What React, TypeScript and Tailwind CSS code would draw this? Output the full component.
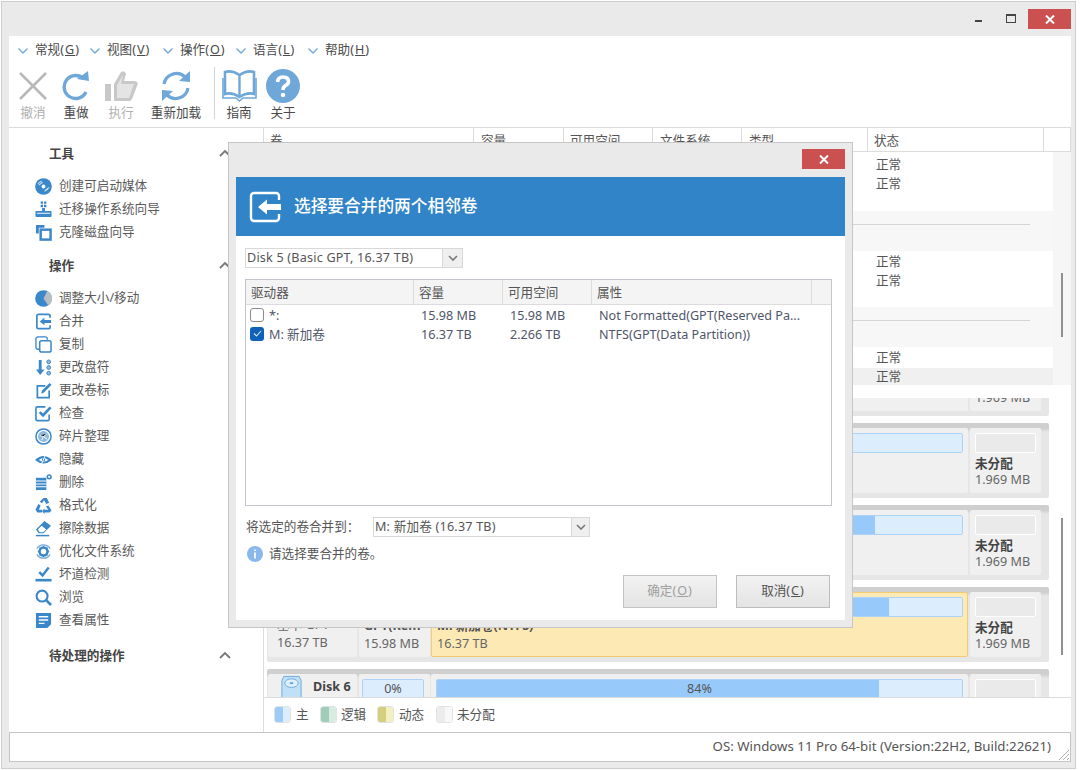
import { ReactNode } from "react";

const BLUE = "#3a87c9";
const LIGHT = "#6fa8d8";

function Ico({ children, size = 18 }: { children: ReactNode; size?: number }) {
  return (
    <svg width={size} height={size} viewBox="0 0 18 18" className="shrink-0">
      {children}
    </svg>
  );
}

const sideIcons: Record<string, ReactNode> = {
  disc: (
    <>
      <circle cx="9" cy="9" r="8.8" fill={BLUE} />
      <path d="M3 6 L7 3 M4 7.5 L8 4.5 M11 13 L15 10 M10 14 L14 11.5" stroke="#cfe3f4" strokeWidth="1.1" />
      <circle cx="9" cy="9" r="2" fill="#fff" />
    </>
  ),
  migrate: (
    <>
      <path d="M6 0.5h2.5V3H6z M9.5 0.5H12V3H9.5z M6 4h2.5v2.5H6z M9.5 4H12v2.5H9.5z" fill={BLUE} />
      <path d="M7.5 7.5h3V10.5h6a1 1 0 0 1 1 1v4.5a1 1 0 0 1-1 1h-15a1 1 0 0 1-1-1v-4.5a1 1 0 0 1 1-1h6z" fill={BLUE} />
      <path d="M2 13h14" stroke="#fff" strokeWidth="1" />
    </>
  ),
  clone: (
    <>
      <path d="M1 1h9v3H4v6H1z" fill={BLUE} />
      <rect x="6" y="6" width="10.5" height="10.5" fill="none" stroke={BLUE} strokeWidth="2.6" />
    </>
  ),
  resize: (
    <>
      <circle cx="9" cy="9" r="8.8" fill={BLUE} />
      <path d="M9 9 L13 1 A8.8 8.8 0 0 1 14 16.5 Z" fill="#b9bec3" />
    </>
  ),
  merge: (
    <>
      <path d="M16 5V3a1.5 1.5 0 0 0-1.5-1.5h-11A1.5 1.5 0 0 0 2 3v12a1.5 1.5 0 0 0 1.5 1.5h11A1.5 1.5 0 0 0 16 15v-2" fill="none" stroke={BLUE} strokeWidth="1.8" />
      <path d="M5 9 L10 5 V7.5 H17 V10.5 H10 V13 Z" fill={BLUE} />
    </>
  ),
  copy: (
    <>
      <path d="M5 14H3a2 2 0 0 1-2-2V3a2 2 0 0 1 2-2h8a2 2 0 0 1 2 2v1" fill="none" stroke={BLUE} strokeWidth="1.4" />
      <rect x="5" y="5" width="12" height="12" rx="2" fill="none" stroke={BLUE} strokeWidth="1.6" />
    </>
  ),
  letter: (
    <>
      <path d="M4 1h3v10h3l-4.5 6L1 11h3z" fill={BLUE} />
      <circle cx="14.5" cy="3" r="2" fill="#8fb8dc" stroke={BLUE} strokeWidth="1" />
      <circle cx="14.5" cy="9" r="2" fill="#8fb8dc" stroke={BLUE} strokeWidth="1" />
      <circle cx="14.5" cy="15" r="2" fill="#8fb8dc" stroke={BLUE} strokeWidth="1" />
    </>
  ),
  label: (
    <>
      <path d="M11 4H2.5v12.5H15V9" fill="none" stroke={BLUE} strokeWidth="1.8" />
      <path d="M6.5 12.5 L7.5 9 L15.5 1 L17.5 3 L9.5 11 Z" fill={BLUE} />
    </>
  ),
  check: (
    <>
      <path d="M15 10v5a1.5 1.5 0 0 1-1.5 1.5h-11A1.5 1.5 0 0 1 1 15V3.5A1.5 1.5 0 0 1 2.5 2H11" fill="none" stroke={BLUE} strokeWidth="1.7" />
      <path d="M5 7.5 L8.5 11 L16.5 2.5" fill="none" stroke={BLUE} strokeWidth="2.8" />
    </>
  ),
  defrag: (
    <>
      <circle cx="9" cy="9" r="8" fill="none" stroke={BLUE} strokeWidth="1.6" />
      <circle cx="9" cy="9" r="5.8" fill="#8db9df" />
      <path d="M5 8 L9 9 L13 6 M9 9 L7 13 M9 9 L13 12" stroke="#fff" strokeWidth="1" />
    </>
  ),
  hide: (
    <>
      <path d="M0 9.5 Q9 1 18 9.5 Q9 17 0 9.5Z" fill={BLUE} />
      <path d="M4 9.5 Q9 5.5 14 9.5 Q9 13 4 9.5Z" fill="#fff" />
      <circle cx="9" cy="9.3" r="1.8" fill={BLUE} />
      <path d="M6 16 L12 2" stroke="#fff" strokeWidth="1" />
    </>
  ),
  delete: (
    <>
      <path d="M1 4h11v13H1z" fill={BLUE} />
      <path d="M1 7.5h11 M1 10.5h11 M1 13.5h11" stroke="#fff" strokeWidth="1.1" />
      <circle cx="15" cy="3" r="2" fill="none" stroke={BLUE} strokeWidth="1.6" />
    </>
  ),
  format: (
    <>
      <path d="M9 1 L12.5 1 L15 6 L12 7.5 L9.5 3.5 L7.5 6.5 L5 5 Z" fill={BLUE} />
      <path d="M3.5 7.5 L0.5 13.5 L2.5 16.5 H7.5 V13.5 H4 L6 9 Z" fill={BLUE} />
      <path d="M14 9 L17.5 14 L15.5 16.5 H10 V18 L7.5 15 L10 12 V13.5 H14.2 L11.5 10 Z" fill={BLUE} />
    </>
  ),
  erase: (
    <>
      <path d="M1 10 L10 1 L17 6 L9 14 H4 Z" fill={BLUE} />
      <path d="M3 10 L7 6 L12 10 L8.5 13 H5 Z" fill="#fff" />
      <path d="M1 16.5h14" stroke={BLUE} strokeWidth="1.6" />
    </>
  ),
  optimize: (
    <>
      <path d="M2 6 A8 8 0 0 1 16 6 M16 12 A8 8 0 0 1 2 12" fill="none" stroke="#76aad6" strokeWidth="1.3" />
      <circle cx="9" cy="9" r="4.2" fill="none" stroke={BLUE} strokeWidth="2.6" />
      <path d="M9 3v2 M9 13v2 M3 9h2 M13 9h2 M4.8 4.8l1.4 1.4 M11.8 11.8l1.4 1.4 M13.2 4.8l-1.4 1.4 M6.2 11.8l-1.4 1.4" stroke={BLUE} strokeWidth="1.4" />
    </>
  ),
  bad: (
    <>
      <path d="M4.5 6.5 L8 10 L14.5 1.5" fill="none" stroke={BLUE} strokeWidth="2.6" />
      <path d="M0.5 15h17" stroke={BLUE} strokeWidth="2.8" />
    </>
  ),
  browse: (
    <>
      <circle cx="7.5" cy="7.5" r="5.8" fill="none" stroke={BLUE} strokeWidth="2.2" />
      <path d="M11.5 11.5 L17 17" stroke={BLUE} strokeWidth="2.8" />
    </>
  ),
  props: (
    <>
      <path d="M1 1h16v12l-4 4H1z" fill={BLUE} />
      <path d="M4 5h10 M4 8.5h10 M4 12h6" stroke="#fff" strokeWidth="1.4" />
    </>
  ),
};

const tools = [
  ["disc", "创建可启动媒体"],
  ["migrate", "迁移操作系统向导"],
  ["clone", "克隆磁盘向导"],
];

const actions = [
  ["resize", "调整大小/移动"],
  ["merge", "合并"],
  ["copy", "复制"],
  ["letter", "更改盘符"],
  ["label", "更改卷标"],
  ["check", "检查"],
  ["defrag", "碎片整理"],
  ["hide", "隐藏"],
  ["delete", "删除"],
  ["format", "格式化"],
  ["erase", "擦除数据"],
  ["optimize", "优化文件系统"],
  ["bad", "坏道检测"],
  ["browse", "浏览"],
  ["props", "查看属性"],
];

function Chevron({ className = "" }: { className?: string }) {
  return (
    <svg width="12" height="8" viewBox="0 0 12 8" className={className}>
      <path d="M1 7 L6 2 L11 7" fill="none" stroke="#777" strokeWidth="1.8" />
    </svg>
  );
}

function SideHeader({ title, mt }: { title: string; mt: string }) {
  return (
    <div className={`flex h-[20px] items-center justify-between pl-[40px] pr-[32px] font-bold text-[#444] ${mt}`}>
      <span className="pt-[2px]">{title}</span>
      <Chevron />
    </div>
  );
}

function SideList({ items, mt }: { items: string[][]; mt: string }) {
  return (
    <div className={mt}>
      {items.map(([icon, label]) => (
        <div key={label} className="flex h-[23px] items-center gap-[7px] pl-[26px]">
          <Ico size={17}>{sideIcons[icon]}</Ico>
          <span className="text-[#5a5a5a]">{label}</span>
        </div>
      ))}
    </div>
  );
}

function MenuItem({ label, k, w }: { label: string; k: string; w: string }) {
  return (
    <div className={`flex items-center gap-[7px] ${w}`}>
      <svg width="10" height="6" viewBox="0 0 10 6">
        <path d="M0.5 0.5 L5 5 L9.5 0.5" fill="none" stroke="#6fa8d8" strokeWidth="1.4" />
      </svg>
      <span className="text-[#4a4a4a]">
        {label}
        <span className="tracking-[1px]">
          (<span className="underline">{k}</span>)
        </span>
      </span>
    </div>
  );
}

function ToolBtn({ label, w, off, children }: { label: string; w: string; off?: boolean; children: ReactNode }) {
  return (
    <div className={`flex flex-col items-center ${w}`}>
      <div className="flex h-[38px] items-center justify-center">{children}</div>
      <span className={`mt-[2px] ${off ? "text-[#b0b0b0]" : "text-[#4a4a4a]"}`}>{label}</span>
    </div>
  );
}

function StatusRows({ lastHot }: { lastHot?: boolean }) {
  return (
    <>
      <div className="flex h-[19px] items-center pl-[612px] text-[#555]">正常</div>
      <div className={`flex h-[19px] items-center pl-[612px] text-[#555] ${lastHot ? "bg-[#f0f0f0]" : ""}`}>正常</div>
    </>
  );
}

function GroupBand() {
  return (
    <div className="mb-[2px] h-[40px] bg-[#f7f7f7] pl-[20px] pr-[23px] pt-[13px]">
      <div className="h-[1px] bg-[#d5d5d8]" />
    </div>
  );
}

function Bar({ fill, text, className = "" }: { fill: number; text?: string; className?: string }) {
  return (
    <div className={`relative h-[20px] overflow-hidden rounded-[2px] border border-[#acd3f7] bg-[#dceefe] ${className}`}>
      <div className="h-full bg-[#97cafb]" style={{ width: `${fill}%` }} />
      {text && <div className="absolute inset-0 flex items-center justify-center pt-[1px] text-[#555]">{text}</div>}
    </div>
  );
}

function DiskRow({
  name,
  base,
  smallTitle,
  smallSize,
  smallPct,
  mainTitle,
  mainPct,
  mainText,
  hot,
  first,
}: {
  name: string;
  base?: string;
  smallTitle?: string;
  smallSize?: string;
  smallPct?: string;
  mainTitle?: string;
  mainPct: number;
  mainText?: string;
  hot?: boolean;
  first?: boolean;
}) {
  return (
    <div className={`flex h-[75px] w-[782px] shrink-0 rounded-[2px] bg-gradient-to-b from-[#cfcfcf] from-[7%] to-[#e6e6e6] to-[12%] pl-[1px] pr-[8px] pt-[5px] ${first ? "-mt-[57px]" : ""}`}>
      <div className="h-[65px] w-[89px] shrink-0 rounded-[2px] bg-[#f0f0f0] pl-[9px] text-[#666]">
        <div className="flex h-[24px] items-center gap-[10px] pl-[3px]">
          <svg width="23" height="24" viewBox="0 0 24 24" className="shrink-0">
            <path d="M4 2h16l2 4v18H2V6z" fill="#bfe0f6" stroke="#6fa8d8" strokeWidth="1" />
            <ellipse cx="12" cy="9" rx="7" ry="4.5" fill="#dff0fb" stroke="#6fa8d8" strokeWidth="1" />
            <ellipse cx="12" cy="9" rx="2" ry="1.2" fill="#6fa8d8" />
          </svg>
          <span className="pt-[3px] font-bold text-[#444]">{name}</span>
        </div>
        <div className="h-[18px] leading-[18px]">{base}</div>
        <div className="h-[18px] leading-[18px]">16.37 TB</div>
      </div>
      <div className="ml-[2px] h-[65px] w-[71px] shrink-0 rounded-[2px] bg-[#f0f0f0] pl-[3px] pt-[5px] text-[#666]">
        <Bar fill={smallPct ? 0 : 100} text={smallPct} className="w-[62px]" />
        <div className="h-[18px] overflow-hidden pl-[2px] font-bold leading-[18px] text-[#555]">{smallTitle}</div>
        <div className="h-[18px] pl-[2px] leading-[18px]">{smallSize}</div>
      </div>
      <div className={`ml-[1px] h-[65px] w-[537px] shrink-0 rounded-[2px] text-[#666] ${hot ? "border border-[#f2cb72] bg-[#fde9b4] px-[4px] pt-[4px]" : "bg-[#f0f0f0] px-[5px] pt-[5px]"}`}>
        <Bar fill={mainPct} text={mainText} />
        <div className="h-[18px] pl-[1px] font-bold leading-[18px] text-[#555]">{mainTitle}</div>
        <div className="h-[18px] pl-[1px] leading-[18px]">16.37 TB</div>
      </div>
      <div className="ml-[2px] h-[65px] w-[71px] shrink-0 rounded-[2px] bg-[#f0f0f0] pl-[5px] pt-[5px] text-[#666]">
        <div className="h-[20px] w-[61px] rounded-[2px] border border-white bg-[#eaeaea]" />
        <div className="h-[18px] pt-[2px] font-bold leading-[18px] text-[#444]">未分配</div>
        <div className="h-[18px] leading-[18px]">1.969 MB</div>
      </div>
    </div>
  );
}

function Swatch({ a, b }: { a: string; b: string }) {
  return (
    <div className="flex h-[17px] w-[17px] overflow-hidden rounded-[3px] border border-[#e2e2e2]">
      <div className={`w-[8px] ${a}`} />
      <div className={`flex-1 ${b}`} />
    </div>
  );
}

function Combo({ text, w, arrow }: { text: string; w: string; arrow: string }) {
  return (
    <div className={`flex h-[20px] items-center border border-[#d8d8d8] ${w}`}>
      <span className="flex-1 pl-[1px] pt-[1px] tracking-[0.2px] text-[#555]">{text}</span>
      <div className={`flex h-full items-center justify-center border-l border-[#d8d8d8] bg-[#efefef] ${arrow}`}>
        <svg width="10" height="6" viewBox="0 0 10 6">
          <path d="M1 1 L5 5 L9 1" fill="none" stroke="#777" strokeWidth="1.6" />
        </svg>
      </div>
    </div>
  );
}

function CloseBtn({ w }: { w: string }) {
  return (
    <div className={`flex h-[20px] items-center justify-center bg-[#cb5050] ${w}`}>
      <svg width="10" height="9" viewBox="0 0 10 9">
        <path d="M1 0.5 L9 8.5 M9 0.5 L1 8.5" stroke="#fff" strokeWidth="2" />
      </svg>
    </div>
  );
}

function MergeDialog() {
  return (
    <div className="absolute left-[226px] top-[140px] flex h-[486px] w-[625px] flex-col border border-[#c6c6c6] bg-[#eaeaea] px-[7px] pb-[7px]">
      <div className="flex h-[34px] shrink-0 justify-end pt-[6px]">
        <CloseBtn w="w-[43px]" />
      </div>
      <div className="flex h-[59px] shrink-0 items-center gap-[13px] bg-[#3184c8] pl-[13px]">
        <svg width="32" height="32" viewBox="0 0 32 32">
          <path d="M30 9V5a3 3 0 0 0-3-3H5a3 3 0 0 0-3 3v22a3 3 0 0 0 3 3h22a3 3 0 0 0 3-3v-4" fill="none" stroke="#fff" strokeWidth="2.4" />
          <path d="M9 16 L18 8.5 V13 H32 V19 H18 V23.5 Z" fill="#fff" />
        </svg>
        <span className="text-[16.7px] font-medium text-white">选择要合并的两个相邻卷</span>
      </div>
      <div className="flex flex-1 flex-col bg-white pl-[9px]">
        <Combo text="Disk 5 (Basic GPT, 16.37 TB)" w="mt-[12px] w-[218px]" arrow="w-[20px]" />
        <div className="mt-[11px] h-[227px] w-[587px] border border-[#c4c4cc]">
          <div className="flex h-[25px] border-b border-[#dcdcdc] bg-[#f4f4f4] text-[#555]">
            <div className="flex w-[168px] items-center border-r border-[#dcdcdc] pl-[5px] pt-[3px]">驱动器</div>
            <div className="flex w-[89px] items-center border-r border-[#dcdcdc] pl-[5px] pt-[3px]">容量</div>
            <div className="flex w-[89px] items-center border-r border-[#dcdcdc] pl-[5px] pt-[3px]">可用空间</div>
            <div className="flex w-[220px] items-center border-r border-[#dcdcdc] pl-[5px] pt-[3px]">属性</div>
          </div>
          <div className="flex h-[19px] items-center text-[#50566a]">
            <div className="flex w-[168px] items-center gap-[5px] pl-[4px]">
              <div className="h-[14px] w-[14px] rounded-[3px] border border-[#8a8a8a]" />
              <span className="pt-[3px]">*:</span>
            </div>
            <div className="w-[89px] pl-[7px] pt-[3px]">15.98 MB</div>
            <div className="w-[89px] pl-[7px] pt-[3px]">15.98 MB</div>
            <div className="w-[220px] pl-[7px] pt-[3px]">Not Formatted(GPT(Reserved Pa...</div>
          </div>
          <div className="flex h-[19px] items-center text-[#50566a]">
            <div className="flex w-[168px] items-center gap-[5px] pl-[4px]">
              <div className="flex h-[14px] w-[14px] items-center justify-center rounded-[3px] bg-[#0f62b8]">
                <svg width="9" height="7" viewBox="0 0 9 7">
                  <path d="M1 3.5 L3.5 6 L8 1" fill="none" stroke="#dbe9f7" strokeWidth="1.1" />
                </svg>
              </div>
              <span className="pt-[3px]">M: 新加卷</span>
            </div>
            <div className="w-[89px] pl-[7px] pt-[3px]">16.37 TB</div>
            <div className="w-[89px] pl-[7px] pt-[3px]">2.266 TB</div>
            <div className="w-[220px] pl-[7px] pt-[3px]">NTFS(GPT(Data Partition))</div>
          </div>
        </div>
        <div className="mt-[11px] flex h-[20px] items-center">
          <span className="w-[128px] pl-[1px] text-[#555]">将选定的卷合并到：</span>
          <Combo text="M: 新加卷 (16.37 TB)" w="w-[217px]" arrow="w-[18px]" />
        </div>
        <div className="mt-[8px] flex h-[18px] items-center gap-[6px] pl-[2px]">
          <svg width="16" height="16" viewBox="0 0 16 16">
            <circle cx="8" cy="8" r="8" fill="#8ab8ec" />
            <path d="M8 3.5v1.6 M8 6.6v6" stroke="#fff" strokeWidth="1.7" />
          </svg>
          <span className="pt-[1px] text-[#555]">请选择要合并的卷。</span>
        </div>
        <div className="mt-[12px] flex justify-end gap-[19px] pr-[15px]">
          <div className="flex h-[33px] w-[94px] items-center justify-center border border-[#c4c4c4] bg-gradient-to-b from-[#f2f2f2] to-[#e4e4e4] text-[#a0a0a0]">
            <span>
              确定
              <span className="tracking-[1px]">
                (<span className="underline">O</span>)
              </span>
            </span>
          </div>
          <div className="flex h-[33px] w-[94px] items-center justify-center border border-[#bdbdbd] bg-gradient-to-b from-[#f2f2f2] to-[#e4e4e4] text-[#555]">
            <span>
              取消
              <span className="tracking-[1px]">
                (<span className="underline">C</span>)
              </span>
            </span>
          </div>
        </div>
      </div>
    </div>
  );
}

export default function App() {
  const cols = [
    ["卷", "w-[210px] pl-[6px]"],
    ["容量", "w-[90px] pl-[7px]"],
    ["可用空间", "w-[89px] pl-[6px]"],
    ["文件系统", "w-[89px] pl-[7px]"],
    ["类型", "w-[126px] pl-[7px]"],
    ["状态", "w-[176px] pl-[6px]"],
    ["", "w-[27px]"],
  ];

  return (
    <div className="h-[770px] w-[1080px] overflow-hidden bg-white pl-[1px] pt-[1px] font-['Noto_Sans','Noto_Sans_CJK_SC',sans-serif] text-[12.6px] leading-none">
      <div className="relative flex h-[768px] w-[1075px] flex-col border border-[#cdcdcd] bg-[#eaeaea] pb-[6px] pl-[7px] pr-[4px]">
        <div className="flex h-[34px] shrink-0 items-start justify-end pt-[7px]">
          <div className="mr-[24px] mt-[11px] h-[2px] w-[7px] bg-[#444]" />
          <div className="mr-[12px] mt-[5px] h-[9px] w-[10px] border border-t-2 border-[#444]" />
          <CloseBtn w="w-[43px]" />
        </div>

        <div className="flex min-h-0 flex-1 flex-col bg-white">
          <div className="flex h-[28px] shrink-0 items-center pl-[9px] pt-[1px]">
            <MenuItem label="常规" k="G" w="w-[72px]" />
            <MenuItem label="视图" k="V" w="w-[73px]" />
            <MenuItem label="操作" k="O" w="w-[73px]" />
            <MenuItem label="语言" k="L" w="w-[72px]" />
            <MenuItem label="帮助" k="H" w="w-[72px]" />
          </div>

          <div className="flex h-[64px] shrink-0 border-b border-[#dcdcdc] pl-[5px] pt-[3px]">
            <ToolBtn label="撤消" w="w-[38px]" off>
              <svg width="30" height="30" viewBox="0 0 30 30">
                <path d="M2 2 L28 28 M28 2 L2 28" stroke="#b8b8b8" strokeWidth="2.6" />
              </svg>
            </ToolBtn>
            <ToolBtn label="重做" w="w-[38px] ml-[5px]">
              <svg width="28" height="30" viewBox="0 0 28 30">
                <path d="M22 8 A11.5 11.5 0 1 0 24 21" fill="none" stroke={LIGHT} strokeWidth="3.4" />
                <path d="M15 8 L27 10 L26 0 Z" fill={LIGHT} />
              </svg>
            </ToolBtn>
            <ToolBtn label="执行" w="w-[38px] ml-[7px]" off>
              <svg width="35" height="32" viewBox="0 0 35 32">
                <path d="M1 14h6v17H1z" fill="#c8c8c8" />
                <path d="M10 14 L17 2 Q21 0 22 4 L20 11 H31 Q35 12 33 16 L28 29 Q27 31 25 31 H10Z" fill="#c8c8c8" />
                <path d="M13 15 L19 5 L17 14 H30 L25 28 H13Z" fill="#e4e4e4" />
              </svg>
            </ToolBtn>
            <ToolBtn label="重新加载" w="w-[54px] ml-[9px]">
              <svg width="32" height="32" viewBox="0 0 32 32">
                <path d="M4 14 A12.5 12.5 0 0 1 25 7" fill="none" stroke={LIGHT} strokeWidth="3.2" />
                <path d="M28 18 A12.5 12.5 0 0 1 7 25" fill="none" stroke={LIGHT} strokeWidth="3.2" />
                <path d="M19 11 L30 12 L30 1 Z M13 21 L2 20 L2 31 Z" fill={LIGHT} />
              </svg>
            </ToolBtn>
            <div className="ml-[11px] h-[52px] w-[1px] bg-[#d4d4d4]" />
            <ToolBtn label="指南" w="w-[38px] ml-[5px]">
              <svg width="35" height="32" viewBox="0 0 35 32">
                <path d="M17.5 5 Q10 0 3 2 V24 Q10 22 17.5 27 Q25 22 32 24 V2 Q25 0 17.5 5Z" fill="#fff" stroke={LIGHT} strokeWidth="2.6" />
                <path d="M17.5 5 V27" stroke={LIGHT} strokeWidth="2.4" />
                <path d="M1 8 V28 H14 L17.5 31 L21 28 H34 V8" fill="none" stroke={LIGHT} strokeWidth="1.6" />
              </svg>
            </ToolBtn>
            <ToolBtn label="关于" w="w-[38px] ml-[6px]">
              <svg width="34" height="34" viewBox="0 0 34 34">
                <circle cx="17" cy="17" r="17" fill={LIGHT} />
                <path d="M11.5 13 Q12 8 17 8 Q22.5 8 22.5 12.5 Q22.5 15 19.5 16.5 Q17 18 17 21" fill="none" stroke="#fff" strokeWidth="3.6" />
                <circle cx="17" cy="26" r="2.3" fill="#fff" />
              </svg>
            </ToolBtn>
          </div>

          <div className="flex min-h-0 flex-1">
            <div className="w-[255px] shrink-0 border-r border-[#dcdcdc] pt-[15px]">
              <SideHeader title="工具" mt="" />
              <SideList items={tools} mt="mt-[12px]" />
              <SideHeader title="操作" mt="mt-[11px]" />
              <SideList items={actions} mt="mt-[12px]" />
              <SideHeader title="待处理的操作" mt="mt-[13px]" />
            </div>

            <div className="flex min-w-0 flex-1 flex-col">
              <div className="flex h-[24px] shrink-0 border-b border-[#dcdcdc]">
                {cols.map(([label, cls], i) => (
                  <div key={i} className={`flex items-center border-r border-[#dcdcdc] pt-[3px] text-[#555] ${cls}`}>
                    {label}
                  </div>
                ))}
              </div>

              <div className="flex h-[233px] shrink-0 overflow-hidden">
                <div className="flex-1 pt-[4px]">
                  <StatusRows />
                  <div className="h-[17px]" />
                  <GroupBand />
                  <StatusRows />
                  <div className="h-[16px]" />
                  <GroupBand />
                  <StatusRows lastHot />
                </div>
                <div className="w-[18px] shrink-0 bg-[#f6f6f6] pl-[8px] pt-[121px]">
                  <div className="h-[64px] w-[2px] bg-[#909090]" />
                </div>
              </div>
              <div className="h-[13px] shrink-0" />

              <div className="flex h-[300px] shrink-0 overflow-hidden border-b border-[#dcdcdc]">
                <div className="flex w-[785px] shrink-0 flex-col gap-[7px] pl-[3px]">
                  <DiskRow first name="Disk 2" base="基本 GPT" mainPct={10} />
                  <DiskRow name="Disk 3" base="基本 GPT" mainPct={0} />
                  <DiskRow name="Disk 4" base="基本 GPT" mainPct={83.5} />
                  <DiskRow name="Disk 5" base="基本 GPT" smallTitle="GPT(Rem" smallSize="15.98 MB" mainTitle="M: 新加卷(NTFS)" mainPct={86} hot />
                  <DiskRow name="Disk 6" smallPct="0%" mainPct={84.2} mainText="84%" />
                </div>
                <div className="flex-1 pl-[12px] pt-[120px]">
                  <div className="h-[137px] w-[2px] bg-[#909090]" />
                </div>
              </div>

              <div className="flex h-[33px] shrink-0 items-center pb-[1px] pl-[10px] text-[#555]">
                <Swatch a="bg-[#9ccbfa]" b="bg-[#dceefe]" />
                <span className="ml-[5px] mt-[3px] w-[24px]">主</span>
                <Swatch a="bg-[#a0cdb9]" b="bg-[#d9ece4]" />
                <span className="ml-[4px] mt-[3px] w-[36px]">逻辑</span>
                <Swatch a="bg-[#d4cf7e]" b="bg-[#f2efc0]" />
                <span className="ml-[5px] mt-[3px] w-[37px]">动态</span>
                <Swatch a="bg-[#ececec]" b="bg-[#f8f8f8]" />
                <span className="ml-[4px] mt-[3px]">未分配</span>
              </div>
            </div>
          </div>

          <div className="relative flex h-[30px] shrink-0 items-center justify-end border border-[#c4c4c4] pr-[19px] text-[13.27px] text-[#555]">
            <span>OS: Windows 11 Pro 64-bit (Version:22H2, Build:22621)</span>
            <svg width="12" height="12" viewBox="0 0 12 12" className="absolute bottom-0 right-0">
              <path d="M11 1 L1 11 M11 5 L5 11 M11 9 L9 11" stroke="#b0b0b0" strokeWidth="1" />
            </svg>
          </div>
        </div>

        <MergeDialog />
      </div>
    </div>
  );
}
